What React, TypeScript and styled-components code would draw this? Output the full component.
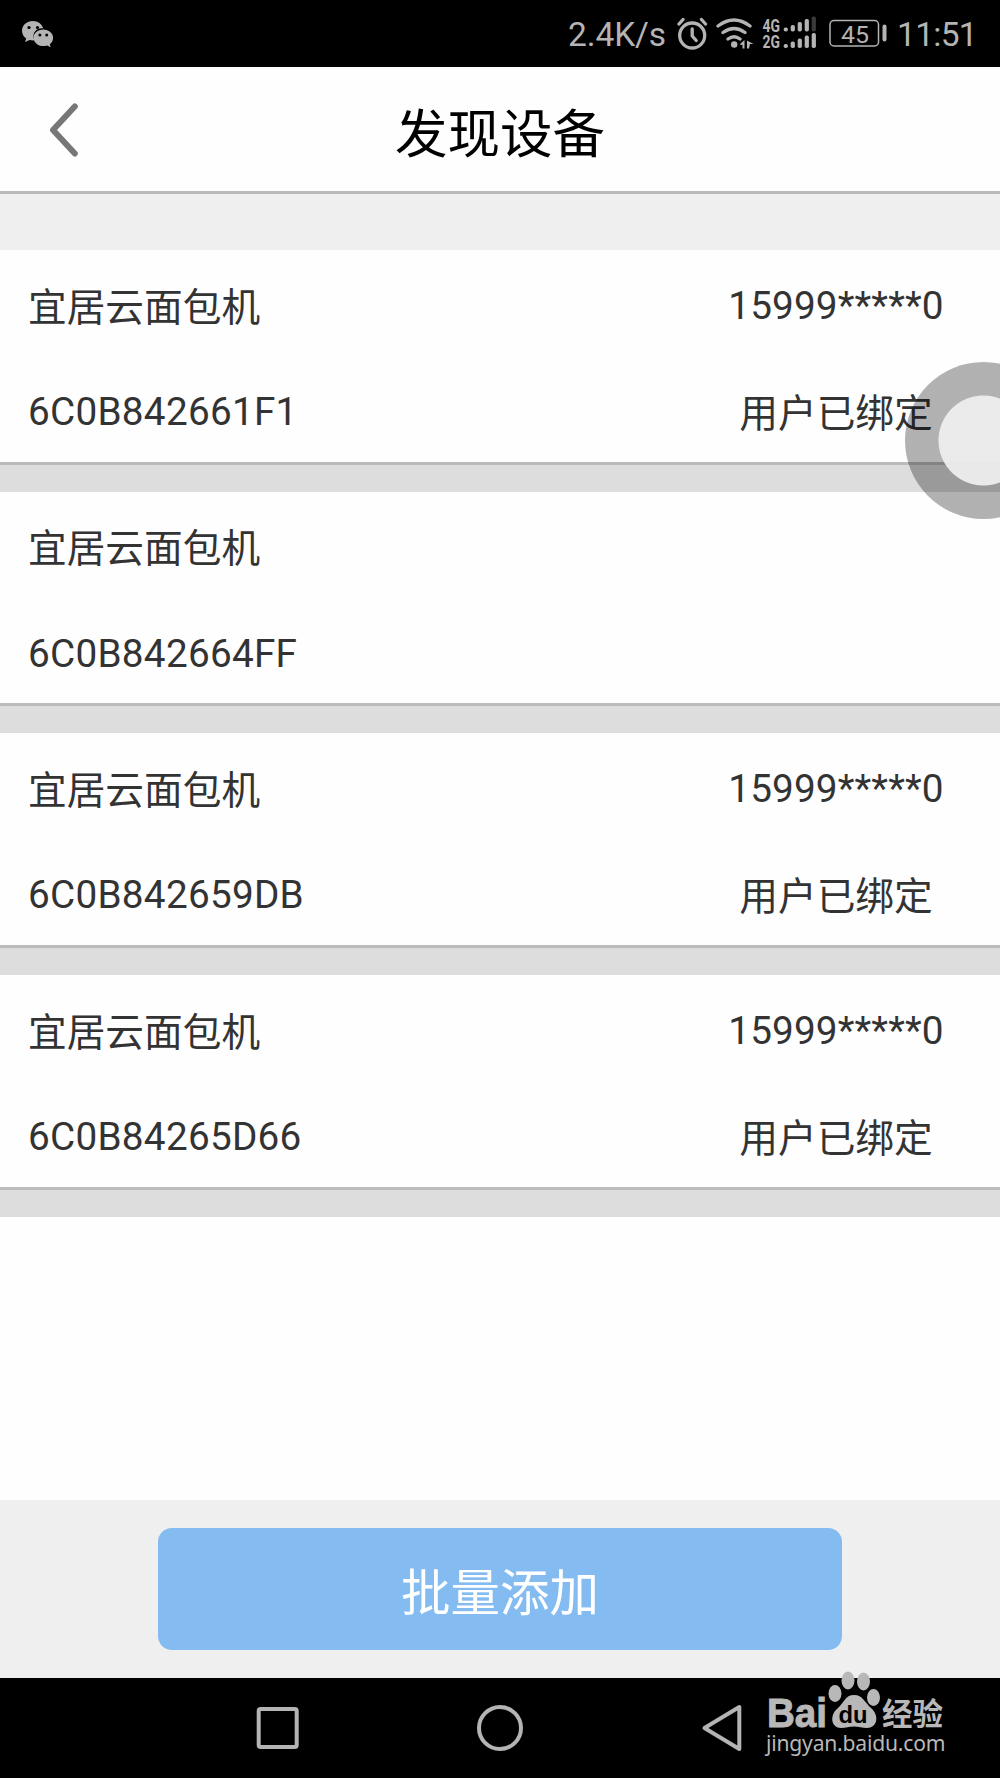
import React from "react";
import styled, { createGlobalStyle } from "styled-components";

const GlobalStyle = createGlobalStyle`
  * { box-sizing: border-box; }
  body { margin: 0; background: #fff; }
`;

const Screen = styled.div`
  position: relative;
  width: 1000px;
  height: 1778px;
  display: flex;
  flex-direction: column;
  overflow: hidden;
  background: #fefefe;
  font-family: Roboto, "Noto Sans CJK SC", sans-serif;
  color: #333;
`;

const StatusBar = styled.header`
  flex: none;
  height: 66.5px;
  display: flex;
  align-items: center;
  background: #000;
  color: #b4b4b4;
  padding: 2px 26px 0 21px;
`;

const WeChat = styled.svg`
  width: 34px;
  height: 30px;
  margin-right: auto;
`;

const Speed = styled.span`
  width: 98px;
  font-size: 33.5px;
  letter-spacing: -0.1px;
  white-space: nowrap;
  margin-right: 11px;
`;

const StatusIcons = styled.svg`
  flex: none;
  width: 212px;
  height: 40px;
`;

const Clock = styled.span`
  width: 77px;
  margin-left: 8px;
  font-size: 33.5px;
  letter-spacing: -0.7px;
  white-space: nowrap;
`;

const TitleBar = styled.div`
  flex: none;
  height: 127.5px;
  display: grid;
  grid-template-columns: 130px 1fr 130px;
  align-items: center;
  border-bottom: 3px solid #b9bbba;
`;

const BackButton = styled.button`
  border: 0;
  padding: 2px 0 0 46px;
  background: none;
  display: flex;
`;

const Title = styled.h1`
  margin: 0;
  padding-top: 13px;
  text-align: center;
  font-size: 52.5px;
  line-height: 76px;
  font-weight: 400;
  color: #000;
`;

const List = styled.main`
  flex: 1;
  padding-top: 56px;
  background: linear-gradient(#efefef 56px, #fefefe 56px);
`;

const Device = styled.article`
  height: 241.7px;
  display: grid;
  grid-template-columns: 1fr 288px;
  grid-template-rows: 105px 106px;
  border-bottom: 27.7px solid #ddd;
  box-shadow: inset 0 -3px #bbb;
  padding: 0 20px 0 28px;
  align-items: center;
  font-size: 38.7px;
  line-height: 50px;
`;

const Cell = styled.span<{ $shift: number; $center?: boolean; $track?: number }>`
  white-space: nowrap;
  padding-top: ${(p) => p.$shift}px;
  text-align: ${(p) => (p.$center ? "center" : "left")};
  letter-spacing: ${(p) => p.$track ?? 0}px;
`;

const Footer = styled.footer`
  flex: none;
  height: 178px;
  padding: 28px 158px;
  background: #efefef;
`;

const AddButton = styled.button`
  display: block;
  width: 684px;
  height: 122px;
  border: 0;
  border-radius: 14px;
  padding: 10px 0 0;
  background: #84bcf2;
  color: #fff;
  font: 400 49.5px/70px Roboto, "Noto Sans CJK SC", sans-serif;
`;

const NavBar = styled.nav`
  flex: none;
  height: 100px;
  display: flex;
  align-items: center;
  justify-content: center;
  gap: 175px;
  background: #000;
`;

const AssistBall = styled.div`
  position: absolute;
  left: 905px;
  top: 362px;
  width: 157px;
  height: 157px;
  border-radius: 50%;
  background: radial-gradient(circle, rgba(234, 234, 234, 0.96) 44.5px, rgba(0, 0, 0, 0.3) 45.5px);
`;

const Watermark = styled.div`
  position: absolute;
  left: 766px;
  top: 1669px;
  width: 180px;
  height: 92px;
  color: #b8b8b8;
`;

const Brand = styled.div`
  display: flex;
  height: 60px;
  align-items: flex-end;
`;

const Latin = styled.svg`
  flex: none;
  width: 62px;
  height: 60px;
  overflow: visible;
`;

const Paw = styled.svg`
  flex: none;
  width: 54px;
  height: 60px;
`;

const Hanzi = styled.span`
  font: 700 30.5px/30px "Noto Sans CJK SC", sans-serif;
  padding-bottom: 2px;
  white-space: nowrap;
`;

const Site = styled.div`
  padding-top: 1px;
  font: 400 21.1px/26px "Noto Sans", "Open Sans", sans-serif;
  letter-spacing: -0.2px;
  white-space: nowrap;
`;

const devices = [
  { name: "宜居云面包机", id: "6C0B842661F1", phone: "15999*****0", state: "用户已绑定" },
  { name: "宜居云面包机", id: "6C0B842664FF" },
  { name: "宜居云面包机", id: "6C0B842659DB", phone: "15999*****0", state: "用户已绑定" },
  { name: "宜居云面包机", id: "6C0B84265D66", phone: "15999*****0", state: "用户已绑定" },
];

const Signal = ({ y, bars, dim }: { y: number; bars: number[]; dim?: boolean }) => (
  <g stroke="none">
    {bars.map((h, i) => (
      <rect
        key={i}
        x={106.7 + i * 7}
        y={y - h}
        width="4.2"
        height={h}
        rx="1.8"
        fill={dim && i === 4 ? "#3a3a3a" : "#b4b4b4"}
      />
    ))}
  </g>
);

export default function App() {
  return (
    <Screen>
      <GlobalStyle />
      <StatusBar>
        <WeChat viewBox="0 0 34 30">
          <path
            fill="#b4b4b4"
            d="M12 2C5.500 2 1 6.300 1 11.800c0 3.200 1.600 6 4.200 7.700L4 23l4.500-2.100c1.500.4 3.200.6 4.800.4C10 13 17 8.500 22.300 9.500 21 5 17 2 12 2z"
          />
          <path
            fill="#b4b4b4"
            d="M22.300 10.500c-5.700 0-9.800 3.800-9.800 8.200s4.200 8.400 9.800 8.400c1.400 0 2.700-.2 3.800-.6l3.600 1.700-.9-3c2.100-1.500 3.300-3.800 3.300-6.500 0-4.500-4.300-8.200-9.800-8.200z"
          />
          <g fill="#000">
            <circle cx="8" cy="8.500" r="1.600" />
            <circle cx="16.500" cy="8.500" r="1.600" />
            <circle cx="18.900" cy="16" r="1.500" />
            <circle cx="25.700" cy="16" r="1.500" />
          </g>
        </WeChat>
        <Speed>2.4K/s</Speed>
        <StatusIcons viewBox="0 0 212 40" fill="none" stroke="#b4b4b4">
          <g strokeWidth="3.300" strokeLinecap="round" strokeLinejoin="round">
            <circle cx="15.200" cy="21.500" r="12.500" />
            <path d="M15.200 15v7l4 4.500M2 10l4-4.500M28.500 10l-4-4.500" />
            <path d="M41 12q16-12 32 0M46 18.500q11-8 22 0M51 25q6-4.500 12 0" />
          </g>
          <g fill="#b4b4b4" stroke="none">
            <circle cx="57.200" cy="30.500" r="3.200" />
            <path d="M62.500 30.500l5-4.500v8.500h-2v-3.500zM70 26.500l6.500 3.500h-3.500l-1 4.500h-2z" />
            <text x="85.500" y="17.500" fontFamily="Roboto" fontWeight="700" fontSize="18.500" textLength="17.500" lengthAdjust="spacingAndGlyphs">4G</text>
            <text x="85.500" y="34" fontFamily="Roboto" fontWeight="700" fontSize="18.500" textLength="17.500" lengthAdjust="spacingAndGlyphs">2G</text>
            <text x="164" y="28.500" fontFamily="Roboto" fontSize="24.500" textLength="28" lengthAdjust="spacingAndGlyphs">45</text>
            <rect x="205.500" y="10.500" width="4" height="17" rx="2" />
          </g>
          <Signal y={17.5} bars={[4, 6.5, 9.5, 12.5, 15]} dim />
          <Signal y={34} bars={[4, 6.5, 9.5, 12.5, 15]} />
          <rect x="153" y="6.500" width="48.500" height="25.500" rx="4" strokeWidth="1.500" />
        </StatusIcons>
        <Clock>11:51</Clock>
      </StatusBar>
      <TitleBar>
        <BackButton aria-label="返回">
          <svg width="32" height="56" viewBox="0 0 32 56" fill="none" stroke="#777" strokeWidth="6" strokeLinecap="round" strokeLinejoin="round">
            <path d="M28.800 4.500L7 28l21.800 23.500" />
          </svg>
        </BackButton>
        <Title>发现设备</Title>
      </TitleBar>
      <List>
        {devices.map((d) => (
          <Device key={d.id}>
            <Cell $shift={10.5}>{d.name}</Cell>
            <Cell $center $shift={7} $track={0.15}>{d.phone}</Cell>
            <Cell $shift={8} $track={0.27}>{d.id}</Cell>
            <Cell $center $shift={11}>{d.state}</Cell>
          </Device>
        ))}
      </List>
      <Footer>
        <AddButton>批量添加</AddButton>
      </Footer>
      <NavBar>
        <svg width="48" height="48" fill="none" stroke="#b4b4b4" strokeWidth="4">
          <rect x="5.700" y="5" width="38" height="38" rx="2" />
        </svg>
        <svg width="48" height="48" fill="none" stroke="#b4b4b4" strokeWidth="4">
          <circle cx="24" cy="24" r="21" />
        </svg>
        <svg width="48" height="48" fill="none" stroke="#b4b4b4" strokeWidth="4" strokeLinejoin="round">
          <path d="M40.300 3v42L5.500 24z" />
        </svg>
      </NavBar>
      <AssistBall />
      <Watermark>
        <Brand>
          <Latin viewBox="0 0 62 60">
            <text x="1" y="57.500" fill="#b8b8b8" stroke="#b8b8b8" strokeWidth="1" fontFamily="Liberation Sans" fontWeight="700" fontSize="41" textLength="60" lengthAdjust="spacingAndGlyphs">Bai</text>
          </Latin>
          <Paw viewBox="0 0 54 60" fill="#b8b8b8">
            <ellipse cx="7" cy="24.500" rx="6.500" ry="8.500" />
            <ellipse cx="20" cy="11.500" rx="6.500" ry="9" />
            <ellipse cx="35.500" cy="12.500" rx="6.500" ry="9" />
            <ellipse cx="45.500" cy="28.500" rx="6.500" ry="8.500" />
            <path d="M26 26c-9 0-10 8-16 13-9 7-7 20 3 20 5 0 8-1.500 13-1.500s8 1.500 13 1.500c10 0 13-12 4-20-6-5-8-13-17-13z" />
            <text x="10.500" y="54" fill="#000" fontFamily="Liberation Sans" fontWeight="700" fontSize="24" textLength="29" lengthAdjust="spacingAndGlyphs">du</text>
          </Paw>
          <Hanzi>经验</Hanzi>
        </Brand>
        <Site>jingyan.baidu.com</Site>
      </Watermark>
    </Screen>
  );
}
